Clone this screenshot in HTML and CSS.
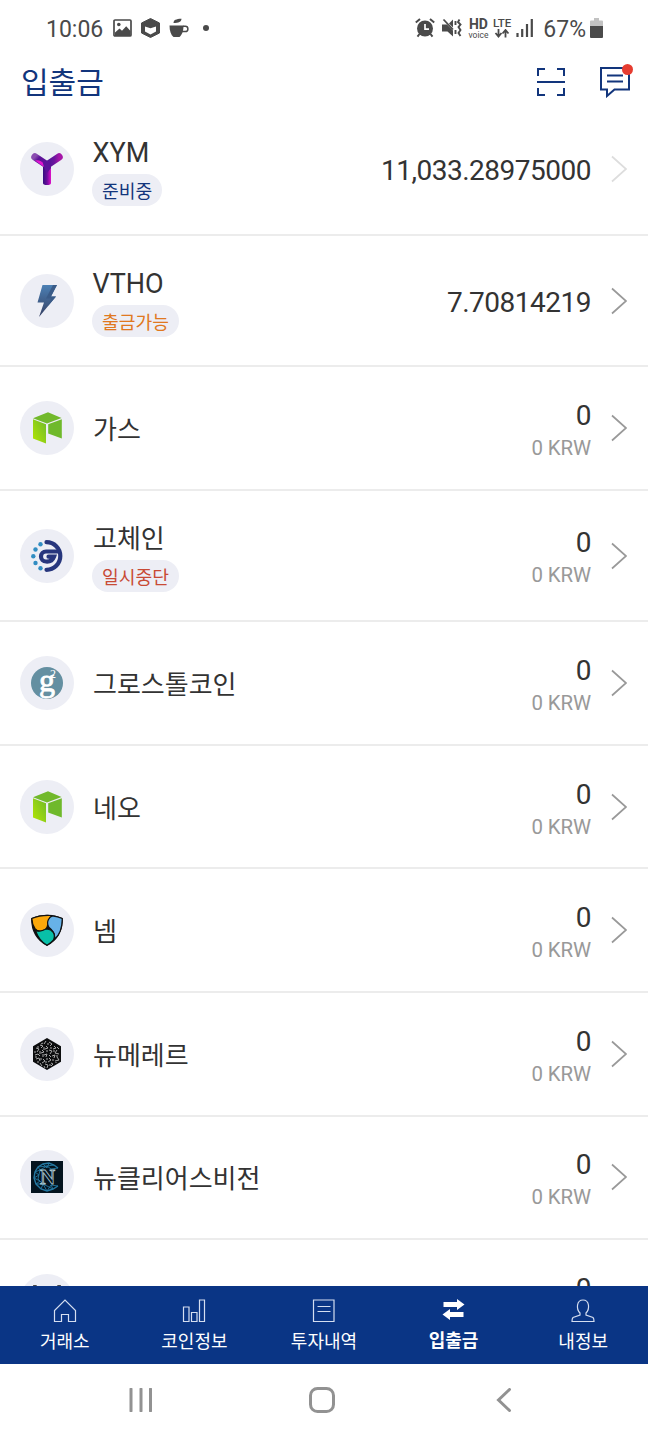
FILE: index.html
```html
<!DOCTYPE html>
<html lang="ko">
<head>
    <meta charset="UTF-8">
    <meta name="viewport" content="width=device-width, initial-scale=1.0">
    <title>입출금</title>
    <link rel="stylesheet" href="styles.css">
</head>

<body>
    <!-- shared icons -->
    <svg class="defs" width="0" height="0">
        <defs>
            <linearGradient id="neoGreen" x1="0" y1="1" x2="1" y2="0">
                <stop offset="0" stop-color="#b4e600"/>
                <stop offset="1" stop-color="#6fba2c"/>
            </linearGradient>
            <linearGradient id="boltBlue" x1="0" y1="0" x2="0" y2="1">
                <stop offset="0" stop-color="#4c80b4"/>
                <stop offset="1" stop-color="#343f63"/>
            </linearGradient>
            <linearGradient id="xymLeft" x1="0" y1="0" x2="1" y2="0.6">
                <stop offset="0" stop-color="#8a4cb0"/>
                <stop offset="0.3" stop-color="#5f1398"/>
                <stop offset="1" stop-color="#5c129a"/>
            </linearGradient>
            <linearGradient id="xymRight" x1="0" y1="0" x2="1" y2="0">
                <stop offset="0" stop-color="#4c1795"/>
                <stop offset="0.6" stop-color="#6a159d"/>
                <stop offset="1" stop-color="#a516a8"/>
            </linearGradient>
            <linearGradient id="xymStem" x1="0" y1="0" x2="1" y2="0">
                <stop offset="0" stop-color="#33107e"/>
                <stop offset="0.5" stop-color="#6b0c9c"/>
                <stop offset="1" stop-color="#e010c8"/>
            </linearGradient>
        </defs>
        <symbol id="arrow" viewBox="0 0 16 28">
            <path d="M1 1.5L15 14L1 26.5" fill="none" stroke="currentColor" stroke-width="1.7"/>
        </symbol>
        <symbol id="neo" viewBox="0 0 32 32">
            <path d="M2 6.3L17 .3L30.5 6L16 11.5z" fill="#72b92b"/>
            <path d="M2 7.2L15 12.2V31.6L2 26.4z" fill="url(#neoGreen)"/>
            <path d="M17.2 12.3L30.8 7.2V26.6L17.2 21.4z" fill="#6fb92b"/>
        </symbol>
    </svg>

    <div class="screen">
        <div class="status-bar">
            <div class="status-left">
                <span class="time">10:06</span>
                <svg width="19" height="18" viewBox="0 0 19 18">
                    <rect x="1" y="1" width="17" height="16" rx="1" fill="none" stroke="#4a4a4a" stroke-width="1.7"/>
                    <circle cx="5.8" cy="5.5" r="1.8" fill="#4a4a4a"/>
                    <path d="M2 13.5L6.5 9.5L9 11.8L13.2 7.3L17.5 12V17H2z" fill="#4a4a4a"/>
                </svg>
                <svg class="hexagon" width="19" height="20" viewBox="0 0 19 20">
                    <path d="M9.5 .5L18.5 5V15L9.5 19.5L.5 15V5z" fill="#4a4a4a" stroke="#4a4a4a" stroke-linejoin="round"/>
                    <path d="M4 8.4L9.5 10.2L15 8.4V13.5L9.5 16.5L4 13.5z" fill="#fff"/>
                </svg>
                <svg width="20" height="20" viewBox="0 0 20 20">
                    <path d="M.5 7.5H14.5C14.5 14 12.5 17 10.5 19H4.5C2 17 .5 13 .5 7.5z" fill="#4a4a4a"/>
                    <path d="M14 8.3H16.3A2.6 2.6 0 0 1 16.3 13.5H13" fill="none" stroke="#4a4a4a" stroke-width="1.5"/>
                    <path d="M4.5 5C4.5 2 7 1 12.5 .8C12.5 4 9.5 5 4.5 5z" fill="#4a4a4a"/>
                </svg>
                <span class="dot"></span>
            </div>
            <div class="status-right">
                <svg width="20" height="20" viewBox="0 0 20 20">
                    <circle cx="10" cy="10.5" r="8" fill="#4a4a4a"/>
                    <path d="M.8 4.5L5 1M19.2 4.5L15 1M4.5 16L2.5 18.6M15.5 16L17.5 18.6" stroke="#4a4a4a" stroke-width="2"/>
                    <path d="M10 6V11.2H14" fill="none" stroke="#fff" stroke-width="1.7"/>
                </svg>
                <svg class="mute" width="20" height="20" viewBox="0 0 20 20">
                    <path d="M0 6.5H5L11 12.5V18.5L5.5 13.5H0zM7 5.5L11 1.5V9.5z" fill="#4a4a4a"/>
                    <path d="M1.5 1.5L11 11.5" stroke="#4a4a4a" stroke-width="1.8"/>
                    <path d="M13.5 3V7M13.5 12V16M17.5 1.5L16 4L18.5 6.5L16.5 9L18.5 12L16.5 15L18.5 18" fill="none" stroke="#4a4a4a" stroke-width="1.9"/>
                </svg>
                <span class="hd"><b>HD</b><small>voice</small></span>
                <span class="lte">LTE
                    <svg width="16" height="9" viewBox="0 0 16 9">
                        <path d="M4.5 0V7M1.5 4L4.5 7.5L7.5 4M11.5 8.5V1.5M8.5 4.5L11.5 1L14.5 4.5" fill="none" stroke="#4a4a4a" stroke-width="1.8"/>
                    </svg>
                </span>
                <svg class="signal" width="18" height="18" viewBox="0 0 18 18">
                    <path d="M1.5 14V18M6.2 10V18M11 5V18M15.8 0V18" stroke="#4a4a4a" stroke-width="2.2"/>
                </svg>
                <span class="battery">67%</span>
                <svg width="13" height="20" viewBox="0 0 13 20">
                    <path d="M4 0H9V2.5H12Q13 2.5 13 3.5V8H0V3.5Q0 2.5 1 2.5H4z" fill="#c2c2c2"/>
                    <path d="M0 8H13V19Q13 20 12 20H1Q0 20 0 19z" fill="#4a4a4a"/>
                </svg>
            </div>
        </div>

        <header class="header">
            <h1>입출금</h1>
            <div class="header-icons">
                <svg width="30" height="30" viewBox="0 0 30 30">
                    <path d="M2 9V2H9M21 2H28V9M2 21V28H9M21 28H28V21M1 15H29" fill="none" stroke="#12357c" stroke-width="2"/>
                </svg>
                <span class="chat">
                    <svg width="30" height="32" viewBox="0 0 30 32">
                        <path d="M1 2H29V23.5H14.5L7 30V23.5H1z" fill="none" stroke="#12357c" stroke-width="2"/>
                        <path d="M7 9.5H23M7 15.5H23" stroke="#12357c" stroke-width="2"/>
                    </svg>
                    <i class="new"></i>
                </span>
            </div>
        </header>

        <ul class="coin-list">
            <li class="coin tall">
                <span class="coin-icon">
                    <svg width="32" height="32" viewBox="0 0 32 32">
                        <g fill="none" stroke-linecap="round">
                            <path d="M4 4L16 12" stroke="url(#xymLeft)" stroke-width="7.5"/>
                            <path d="M28 4L16 12" stroke="url(#xymRight)" stroke-width="7.5"/>
                        </g>
                        <path d="M12 11H20V30Q20 32 16 32T12 30z" fill="url(#xymStem)"/>
                        <path d="M4 7.5Q10 6.5 13 11.5V14z" fill="#e015cf"/>
                        <path d="M12 8H20V15L16 20Q12 14 12 8z" fill="#5c129a"/>
                    </svg>
                </span>
                <div class="coin-name latin">XYM<span class="badge ready">준비중</span></div>
                <div class="amount">11,033.28975000</div>
                <svg class="arrow disabled"><use href="#arrow"/></svg>
            </li>
            <li class="coin tall">
                <span class="coin-icon">
                    <svg width="32" height="32" viewBox="0 0 32 32">
                        <path d="M11.5 0H26L20 11.5H25L8 32L13 17.5H6.5z" fill="url(#boltBlue)"/>
                        <path d="M22 0H26L20 11.5H25L17 21L20 13.5H15z" fill="#3a5b88"/>
                    </svg>
                </span>
                <div class="coin-name latin">VTHO<span class="badge open">출금가능</span></div>
                <div class="amount">7.70814219</div>
                <svg class="arrow"><use href="#arrow"/></svg>
            </li>
            <li class="coin">
                <span class="coin-icon"><svg width="32" height="32"><use href="#neo"/></svg></span>
                <div class="coin-name">가스</div>
                <div class="amount">0<small>0 KRW</small></div>
                <svg class="arrow"><use href="#arrow"/></svg>
            </li>
            <li class="coin tall">
                <span class="coin-icon">
                    <svg width="32" height="32" viewBox="0 0 32 32">
                        <g fill="none" stroke="#27367d" stroke-width="4.2" stroke-linecap="round">
                            <path d="M15.5 2.2A13.8 13.8 0 0 1 15.5 29.8"/>
                            <path d="M28 11.5H15A5 5 0 0 0 15 21.5Q21 22 23 16.7H17.500"/>
                        </g>
                        <g fill="#318dc2">
                            <circle cx="9.5" cy="4.3" r="2.2"/>
                            <circle cx="4.5" cy="9.5" r="2.2"/>
                            <circle cx="2.3" cy="16.2" r="2.2"/>
                            <circle cx="4.5" cy="23" r="2.2"/>
                            <circle cx="9.5" cy="28.2" r="2.2"/>
                        </g>
                    </svg>
                </span>
                <div class="coin-name">고체인<span class="badge stop">일시중단</span></div>
                <div class="amount">0<small>0 KRW</small></div>
                <svg class="arrow"><use href="#arrow"/></svg>
            </li>
            <li class="coin">
                <span class="coin-icon">
                    <svg class="grs" width="32" height="32" viewBox="0 0 32 32">
                        <circle cx="16" cy="16" r="16" fill="#648fa1"/>
                        <text class="grs-g" x="8" y="23.5">g</text>
                        <text class="grs-2" x="19" y="11">2</text>
                    </svg>
                </span>
                <div class="coin-name">그로스톨코인</div>
                <div class="amount">0<small>0 KRW</small></div>
                <svg class="arrow"><use href="#arrow"/></svg>
            </li>
            <li class="coin">
                <span class="coin-icon"><svg width="32" height="32"><use href="#neo"/></svg></span>
                <div class="coin-name">네오</div>
                <div class="amount">0<small>0 KRW</small></div>
                <svg class="arrow"><use href="#arrow"/></svg>
            </li>
            <li class="coin">
                <span class="coin-icon">
                    <svg width="32" height="32" viewBox="0 0 32 32">
                        <g stroke="#111" stroke-width="1.2" stroke-linejoin="round">
                            <path d="M.7 4.5Q16 -2 31.3 4.5Q31.5 23 16 31.3Q.5 23 .7 4.5z" fill="#111"/>
                            <path d="M.8 4.5Q10 .5 21.5 1.5C17.5 3.5 17.5 7 16.5 11.5C15.5 17 7.5 19 4 14.5Q1 10 .8 4.5z" fill="#fba80b"/>
                            <path d="M21.5 1.8Q27 2.5 31.2 4.5Q31.5 18 23.5 25.5C25 19 20.5 15.5 18 13.5C14.5 8 18.5 2.5 21.5 1.8z" fill="#67b2e8"/>
                            <path d="M4.5 16.5C9 19 12 15.5 16 15C21.5 15.5 25 20 22.5 26Q20 29 16 31.3Q8 27 4.5 16.5z" fill="#08c0a8"/>
                        </g>
                    </svg>
                </span>
                <div class="coin-name">넴</div>
                <div class="amount">0<small>0 KRW</small></div>
                <svg class="arrow"><use href="#arrow"/></svg>
            </li>
            <li class="coin">
                <span class="coin-icon">
                    <svg width="32" height="32" viewBox="0 0 32 32">
                        <path d="M16 0L30 8.2V23.8L16 32L2 23.8V8.2z" fill="#0c0d0e"/>
                        <g fill="none" stroke="#a8a8a8" stroke-width="1">
                            <path d="M15 3L13 6M18 4L21 6L19 8M9 7L12 8L10 10M15 8L17 10L14 11M23 8L25 10L22 11M5 10L8 11L6 14M11 12L13 14L10 15M18 12L21 13L19 16M26 12L24 15L28 16M4 17L7 16L9 18M13 17L16 16L15 19M21 18L24 17L23 20M5 21L8 20L9 23M12 21L14 23L11 25M18 20L20 22L17 24M26 19L28 22L24 23M14 26L17 27L16 30M20 25L22 26L20 28M9 25L11 28"/>
                            <path d="M16 6H18M12 5L10 6M20 9V11M13 9V12M7 8V10M26 9L28 11M9 13V16M16 12V14M23 12V14M4 13V15M12 16V19M18 17L20 19M26 17V19M4 19H6M10 20V22M16 20V22M22 21V23M7 23V25M14 24H16M19 26V28M25 24V25M13 28L14 30"/>
                        </g>
                    </svg>
                </span>
                <div class="coin-name">뉴메레르</div>
                <div class="amount">0<small>0 KRW</small></div>
                <svg class="arrow"><use href="#arrow"/></svg>
            </li>
            <li class="coin">
                <span class="coin-icon">
                    <svg width="32" height="32" viewBox="0 0 32 32">
                        <rect width="32" height="32" fill="#04141f"/>
                        <g fill="none" stroke="#2478a2" stroke-width=".9">
                            <path d="M27 7L23 4L18 2L12 3L7 6L4 11L3 17L5 23L10 28L16 30L22 28L27 25" stroke-width="1.4"/>
                            <path d="M7 6L16 5L23 4M12 3L16 7L18 2M4 11L9 9L7 6M3 17L8 14L4 11M5 23L9 20L3 17M10 28L12 23L5 23M16 30L12 23L22 28L20 24L16 30M27 25L20 24M27 7L20 8L16 5L9 9L7 18L12 23"/>
                        </g>
                        <text class="ncn" x="16.5" y="23">N</text>
                    </svg>
                </span>
                <div class="coin-name">뉴클리어스비전</div>
                <div class="amount">0<small>0 KRW</small></div>
                <svg class="arrow"><use href="#arrow"/></svg>
            </li>
            <li class="coin">
                <span class="coin-icon">
                    <svg width="32" height="32" viewBox="0 0 32 32">
                        <path d="M2 .3H5.5L9 7H4zM30 .3H26.5L23 7H28z" fill="#111"/>
                    </svg>
                </span>
                <div class="coin-name"></div>
                <div class="amount">0<small>0 KRW</small></div>
                <svg class="arrow"><use href="#arrow"/></svg>
            </li>
        </ul>

        <nav class="tab-bar">
            <a class="tab">
                <svg width="24" height="24" viewBox="0 0 24 24">
                    <path d="M1.5 22.5V11.5L12 1L22.5 11.5V22.5H15.5V15.5H8.5V22.5z"/>
                </svg>
                거래소
            </a>
            <a class="tab">
                <svg width="24" height="24" viewBox="0 0 24 24">
                    <path d="M1.5 8H7V22.5H1.5zM9.5 13.5H15V22.5H9.5zM17.5 1H22.5V22.5H17.5z"/>
                </svg>
                코인정보
            </a>
            <a class="tab">
                <svg width="24" height="24" viewBox="0 0 24 24">
                    <path d="M1.5 1H22V22.5H1.5zM5.5 7.5H18.5M5.5 12.5H18.5"/>
                </svg>
                투자내역
            </a>
            <a class="tab active">
                <svg width="24" height="24" viewBox="0 0 24 24">
                    <path d="M1.5 3H15V0L22.5 5.5L15 11V8H1.5zM21.5 13H8V10L.5 15.5L8 21V18H21.5z"/>
                </svg>
                입출금
            </a>
            <a class="tab">
                <svg width="24" height="24" viewBox="0 0 24 24">
                    <path d="M9 14C5 10 5.5 1 12 1S19 10 15 14V16L22 18.5Q23 19.5 23 22.5H1Q1 19.5 2 18.5L9 16z"/>
                </svg>
                내정보
            </a>
        </nav>

        <div class="system-nav">
            <svg width="24" height="24" viewBox="0 0 24 24">
                <path d="M2 1V23M12 1V23M21.5 1V23"/>
            </svg>
            <svg class="home" width="26" height="26" viewBox="0 0 26 26">
                <rect x="1.5" y="1.5" width="23" height="23" rx="7"/>
            </svg>
            <svg width="16" height="24" viewBox="0 0 16 24">
                <path d="M13.5 1.5L2.5 12L13.5 22.5"/>
            </svg>
        </div>
    </div>
</body>
</html>
```

FILE: styles.css
```css
* {
    box-sizing: border-box;
}
body {
    margin: 0;
    background-color: #fff;
    color: #333;
    font-family: Roboto, 'Noto Sans CJK KR', sans-serif;
}
.defs {
    position: absolute;
}
.screen {
    display: flex;
    flex-direction: column;
    height: 1440px;
    overflow: hidden;
}
svg {
    flex: none;
    display: block;
}

/* status bar */
.status-bar {
    display: flex;
    justify-content: space-between;
    height: 56px;
    padding: 0 45px 0 46px;
    color: #4a4a4a;
    font-size: 23px;
}
.status-left,
.status-right {
    display: flex;
    align-items: center;
}
.status-left {
    gap: 10px;
}
.time {
    padding-top: 3px;
}
.hexagon {
    margin: 0 -1px;
}
.dot {
    width: 6px;
    height: 6px;
    margin-left: 4px;
    border-radius: 50%;
    background-color: #4a4a4a;
}
.mute {
    margin-left: 7px;
}
.hd {
    display: flex;
    flex-direction: column;
    align-items: center;
    width: 21px;
    margin-left: 6px;
}
.hd b {
    font-size: 14px;
    line-height: 13px;
}
.hd small {
    font-size: 8.5px;
    line-height: 8px;
}
.lte {
    display: flex;
    flex-direction: column;
    align-items: center;
    margin-left: 4px;
    font-size: 11.5px;
    font-weight: 500;
    line-height: 11px;
}
.signal {
    margin-left: 5px;
}
.battery {
    margin: 3px 4px 0 9px;
}

/* header */
.header {
    display: flex;
    justify-content: space-between;
    align-items: center;
    height: 48.7px;
    padding: 4px 18px 0 21px;
}
.header h1 {
    margin: 0;
    padding-top: 2px;
    color: #12357c;
    font-size: 30px;
    font-weight: 400;
    line-height: 44px;
}
.header-icons {
    display: flex;
    align-items: center;
    gap: 34px;
}
.chat {
    position: relative;
}
.new {
    position: absolute;
    top: -2px;
    right: -3px;
    width: 11px;
    height: 11px;
    border-radius: 50%;
    background-color: #e63c30;
}

/* coin list */
.coin-list {
    flex: 1;
    min-height: 0;
    margin: 0;
    padding: 0;
    overflow: hidden;
    list-style: none;
}
.coin {
    display: flex;
    align-items: center;
    height: 123.6px;
    padding: 0 21px 0 20px;
    border-bottom: 2px solid #ececec;
}
.coin.tall {
    height: 131.3px;
}
.coin-icon {
    display: flex;
    align-items: center;
    justify-content: center;
    width: 54px;
    height: 54px;
    border-radius: 50%;
    background-color: #edeef5;
}
.coin-name {
    display: flex;
    flex: 1;
    flex-direction: column;
    align-items: flex-start;
    margin-left: 19px;
    padding-top: 4px;
    font-size: 26px;
    line-height: 34px;
}
.coin-name.latin {
    margin-left: 18.5px;
    font-size: 27px;
}
.tall .coin-name {
    padding-top: 3px;
}
.badge {
    height: 32px;
    margin: 4px 0 0 -1px;
    padding: 1px 10px 0;
    border-radius: 16px;
    background-color: #edeef5;
    font-size: 18.2px;
    line-height: 33px;
}
.latin .badge {
    margin-left: -0.5px;
}
.ready {
    color: #12357c;
}
.open {
    color: #e07820;
}
.stop {
    color: #c84a35;
}
.amount {
    padding-top: 6px;
    font-size: 28px;
    letter-spacing: -0.5px;
    line-height: 34px;
    text-align: right;
}
.tall .amount {
    padding-top: 4px;
}
.amount small {
    display: block;
    color: #999;
    font-size: 20.4px;
    letter-spacing: -0.1px;
    line-height: 30px;
}
.arrow {
    width: 16px;
    height: 28px;
    margin-left: 20px;
    color: #999;
}
.arrow.disabled {
    color: #ddd;
}
.grs text {
    fill: #fff;
    font-family: 'Liberation Serif', serif;
}
.grs-g {
    stroke: #fff;
    stroke-width: 0.8px;
    font-size: 32px;
}
.grs-2 {
    font-size: 12px;
}
.ncn {
    fill: #04141f;
    stroke: #a9c6d2;
    stroke-width: 0.8px;
    font-family: 'Liberation Serif', serif;
    font-size: 21px;
    font-weight: bold;
    text-anchor: middle;
}

/* bottom tabs */
.tab-bar {
    display: grid;
    grid-template-columns: repeat(5, 1fr);
    height: 78px;
    background-color: #0a3585;
}
.tab {
    display: flex;
    flex-direction: column;
    align-items: center;
    padding-top: 13px;
    color: #fff;
    font-size: 18px;
    line-height: 38px;
}
.tab svg {
    fill: none;
    stroke: #d5def0;
    stroke-width: 1.2px;
}
.tab.active {
    font-weight: bold;
    line-height: 35px;
}
.tab.active svg {
    fill: #fff;
    stroke: none;
}

/* android navigation */
.system-nav {
    display: flex;
    justify-content: space-between;
    align-items: center;
    height: 76px;
    padding: 0 136px 4px 129px;
}
.system-nav svg {
    fill: none;
    stroke: #929292;
    stroke-width: 3px;
    stroke-linecap: round;
}
.system-nav .home {
    margin-right: 5px;
}
```
